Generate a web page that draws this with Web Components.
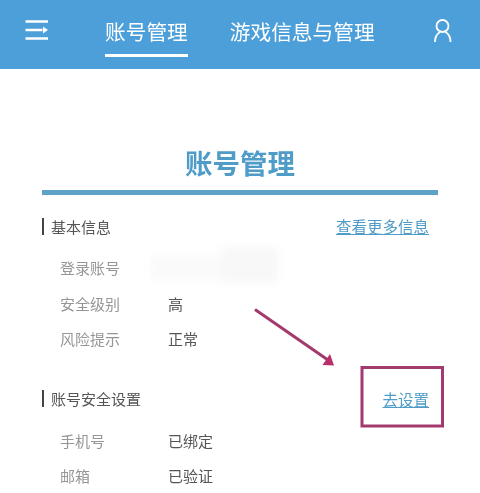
<!DOCTYPE html>
<html lang="zh">
<head>
<meta charset="utf-8">
<title>账号管理</title>
<style>
  html, body { margin: 0; background: #fff; }
  body { width: 480px; height: 493px; overflow: hidden; position: relative; font-family: "Noto Sans CJK SC", "Noto Sans", sans-serif; }
</style>
</head>
<body>
<app-header>
  <nav-tab active>账号管理</nav-tab>
  <nav-tab>游戏信息与管理</nav-tab>
</app-header>
<account-page heading="账号管理">
  <info-section heading="基本信息" link="查看更多信息">
    <info-row label="登录账号"><blur-smudge></blur-smudge></info-row>
    <info-row label="安全级别">高</info-row>
    <info-row label="风险提示">正常</info-row>
  </info-section>
  <info-section heading="账号安全设置" link="去设置" style="margin-top:32px">
    <info-row label="手机号">已绑定</info-row>
    <info-row label="邮箱">已验证</info-row>
  </info-section>
</account-page>
<arrow-mark></arrow-mark>

<script>
class AppHeader extends HTMLElement {
  constructor() {
    super();
    this.attachShadow({mode: 'open'}).innerHTML = `
      <style>
        :host { display: flex; align-items: stretch; height: 68.500px; background: #4c9fd9; color: #fff; box-sizing: border-box; padding: 0 27px 0 25px; filter: blur(.35px); }
        .menu { width: 23px; height: 20px; align-self: center; margin: 0 57px 8px 0; flex: none; }
        .tabs { display: flex; gap: 42px; flex: 1; }
        .user { width: 20px; height: 24px; align-self: center; margin-bottom: 8px; flex: none; }
      </style>
      <svg class="menu" viewBox="0 0 23 20" fill="none" stroke="#fff" stroke-width="2.300">
        <path d="M0.500 1.500h22.500M0.500 10h17M0.500 18.500h22.500"/>
        <path d="M18 6.500l5 3.500l-5 3.500z" fill="#fff" stroke="none"/>
      </svg>
      <div class="tabs"><slot></slot></div>
      <svg class="user" viewBox="0 0 20 24" fill="none" stroke="#fff" stroke-width="1.800">
        <circle cx="9.500" cy="8" r="6"/>
        <path d="M2 24c0-5 2.500-8.500 5-10M17.500 24c0-5-2.500-8.500-5-10"/>
      </svg>`;
  }
}
customElements.define('app-header', AppHeader);

class NavTab extends HTMLElement {
  constructor() {
    super();
    this.attachShadow({mode: 'open'}).innerHTML = `
      <style>
        :host { display: block; box-sizing: border-box; height: 57px; padding-top: 16px; font-size: 20.700px; line-height: 30px; color: #fff; white-space: nowrap; }
        :host([active]) { border-bottom: 3px solid #fff; }
      </style>
      <slot></slot>`;
  }
}
customElements.define('nav-tab', NavTab);

class AccountPage extends HTMLElement {
  constructor() {
    super();
    this.attachShadow({mode: 'open'}).innerHTML = `
      <style>
        :host { display: block; padding: 72.500px 42px 0; filter: blur(.35px); }
        h1 { margin: 0; font-size: 27.500px; line-height: 42px; font-weight: 700; color: #4f9cc9; text-align: center; }
        .rule { height: 5px; background: #5ea2c8; margin: 7px 0 21px; }
      </style>
      <h1></h1>
      <div class="rule"></div>
      <slot></slot>`;
    this.shadowRoot.querySelector('h1').textContent = this.getAttribute('heading');
  }
}
customElements.define('account-page', AccountPage);

class InfoSection extends HTMLElement {
  constructor() {
    super();
    this.attachShadow({mode: 'open'}).innerHTML = `
      <style>
        :host { display: block; }
        .top { display: flex; align-items: center; justify-content: space-between; height: 20px; margin-bottom: 14px; padding-right: 9px; }
        .name { border-left: 2px solid #444; padding-left: 7px; font-size: 15px; line-height: 17px; color: #555; }
        a { font-size: 15.500px; line-height: 20px; color: #4f9cc9; text-decoration: underline; }
      </style>
      <div class="top"><span class="name"></span><a></a></div>
      <slot></slot>`;
    this.shadowRoot.querySelector('.name').textContent = this.getAttribute('heading');
    this.shadowRoot.querySelector('a').textContent = this.getAttribute('link');
  }
}
customElements.define('info-section', InfoSection);

class InfoRow extends HTMLElement {
  constructor() {
    super();
    this.attachShadow({mode: 'open'}).innerHTML = `
      <style>
        :host { display: flex; height: 35.500px; align-items: center; padding-left: 18px; font-size: 15px; }
        .label { width: 108px; color: #969696; flex: none; }
        .value { color: #555; }
      </style>
      <span class="label"></span><span class="value"><slot></slot></span>`;
    this.shadowRoot.querySelector('.label').textContent = this.getAttribute('label');
  }
}
customElements.define('info-row', InfoRow);

class BlurSmudge extends HTMLElement {
  constructor() {
    super();
    this.attachShadow({mode: 'open'}).innerHTML = `
      <style>
        :host { display: flex; align-items: center; margin-left: -18px; filter: blur(4px); }
        .low { width: 72px; height: 24px; background: #fafafa; }
        .high { width: 56px; height: 36px; background: #f8f8f8; margin-top: -5px; }
      </style>
      <div class="low"></div><div class="high"></div>`;
  }
}
customElements.define('blur-smudge', BlurSmudge);

// the red note drawn over the screenshot: arrow and box around the link
class ArrowMark extends HTMLElement {
  constructor() {
    super();
    this.attachShadow({mode: 'open'}).innerHTML = `
      <style>
        :host { position: absolute; left: 0; top: 0; width: 480px; height: 493px; pointer-events: none; filter: blur(.3px); }
        svg { display: block; }
      </style>
      <svg width="480" height="493" viewBox="0 0 480 493" fill="none">
        <path d="M255 309.500L328 360" stroke="#a33a6e" stroke-width="3"/>
        <path d="M334 365.500L322.500 365L330 354z" fill="#b92f6c"/>
        <rect x="362" y="367.500" width="80.500" height="58.500" stroke="#a33a6e" stroke-width="3"/>
      </svg>`;
  }
}
customElements.define('arrow-mark', ArrowMark);
</script>
</body>
</html>
